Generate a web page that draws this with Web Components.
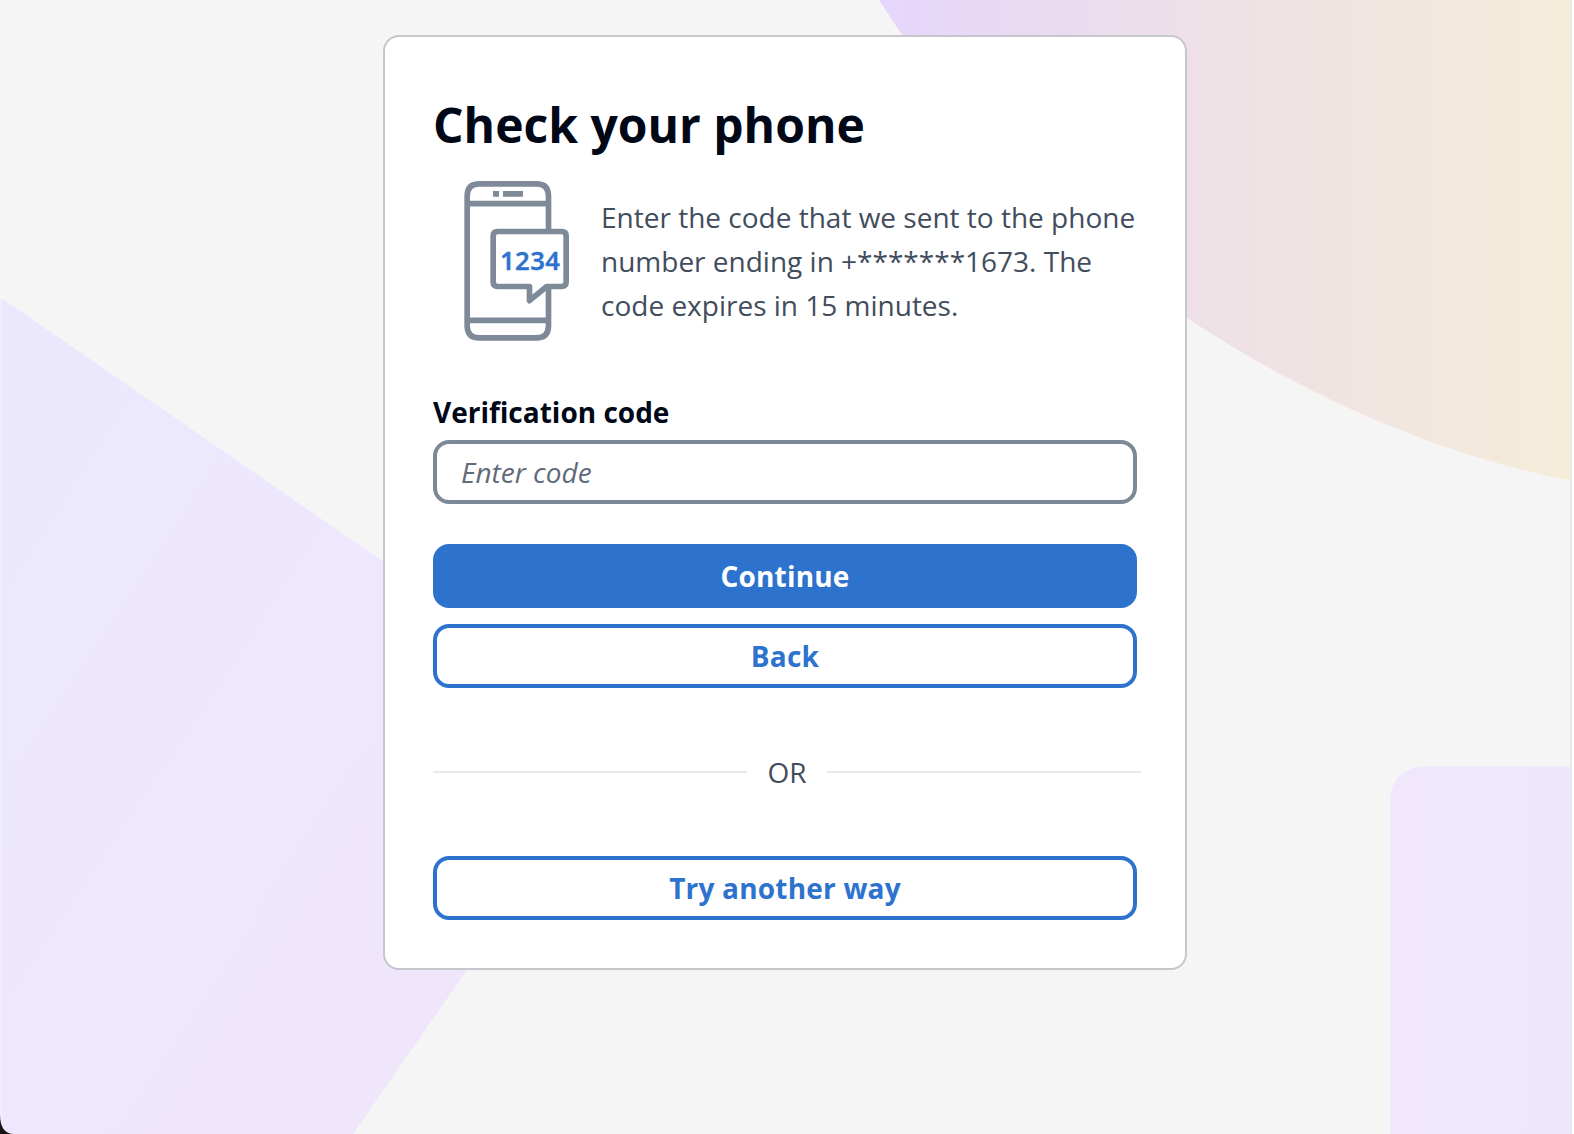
<!DOCTYPE html>
<html lang="en">
<head>
<meta charset="utf-8">
<title>Check your phone</title>
<style>
html, body {
  margin: 0;
  height: 100%;
}
body {
  overflow: hidden;
  font-family: "Open Sans", "Noto Sans", sans-serif;
  font-size: 28px;
  color: #424d5c;
}
</style>
</head>
<body>
<app-backdrop>
  <auth-card>
    <span slot="title">Check your phone</span>
    <phone-hint slot="hint">Enter the code that we sent to the phone number ending in +*******1673. The code expires in 15 minutes.</phone-hint>
    <code-field label="Verification code" placeholder="Enter code"></code-field>
    <action-button variant="primary">Continue</action-button>
    <action-button>Back</action-button>
    <or-divider>OR</or-divider>
    <action-button>Try another way</action-button>
  </auth-card>
</app-backdrop>

<script>
const define = (name, html, setup) => {
  const template = document.createElement("template");
  template.innerHTML = html;
  customElements.define(name, class extends HTMLElement {
    constructor() {
      super();
      this.attachShadow({ mode: "open" });
    }
    connectedCallback() {
      if (this.shadowRoot.firstChild) return;
      this.shadowRoot.appendChild(template.content.cloneNode(true));
      if (setup) setup(this);
    }
  });
};

// page background with the large coloured shapes
define("app-backdrop", `
<style>
:host {
  display: flex;
  justify-content: center;
  align-items: flex-start;
  box-sizing: border-box;
  width: 100%;
  height: 100vh;
  padding: 35px 4px 0 0;
  position: relative;
}
svg {
  position: absolute;
  inset: 0;
}
::slotted(*) {
  position: relative;
}
</style>
<svg width="1574" height="1134" viewBox="0 0 1574 1134">
  <defs>
    <linearGradient id="sun" gradientUnits="userSpaceOnUse" x1="880" y1="0" x2="1570" y2="0">
      <stop offset="0" stop-color="#e5d6fc"/>
      <stop offset=".45" stop-color="#ede0e7"/>
      <stop offset="1" stop-color="#f5ecd9"/>
    </linearGradient>
    <linearGradient id="tile" gradientUnits="userSpaceOnUse" x1="0" y1="500" x2="480" y2="820">
      <stop offset="0" stop-color="#ebe8fe"/>
      <stop offset="1" stop-color="#f0e6fc"/>
    </linearGradient>
    <linearGradient id="block">
      <stop offset="0" stop-color="#f0e7fc"/>
      <stop offset="1" stop-color="#ede6fe"/>
    </linearGradient>
  </defs>
  <rect width="1574" height="1134" fill="#f5f5f5"/>
  <path d="M879 0C958 124 1064 237 1187 318C1303 395 1434 453.500 1570 480.500V0Z" fill="url(#sun)"/>
  <path d="M0 297L631.500 733L353 1134H0Z" fill="url(#tile)"/>
  <path d="M0 290h2v844h-2z" fill="#fff" opacity=".25"/>
  <rect x="1390.500" y="766.500" width="240" height="420" rx="32" fill="url(#block)"/>
  <path d="M1570 0h2v1134h-2z" fill="#e8e8e8"/>
  <path d="M1572 0h2v1134h-2z" fill="#fff"/>
  <path d="M0 1114Q0 1134 14 1134H0Z" fill="#151515"/>
</svg>
<slot></slot>
`);

define("auth-card", `
<style>
:host {
  display: flex;
  flex-direction: column;
  box-sizing: border-box;
  width: 804px;
  height: 935px;
  padding: 48px;
  border: 2px solid #c6c6cd;
  border-radius: 16px;
  background: #fff;
}
h1 {
  margin: 7px 0 0;
  font-size: 48px;
  line-height: 66px;
  font-weight: 700;
  color: #000716;
}
</style>
<h1><slot name="title"></slot></h1>
<slot name="hint"></slot>
<slot></slot>
`);

define("phone-hint", `
<style>
:host {
  display: flex;
  align-items: center;
  height: 180px;
  margin-top: 12px;
  padding-left: 17px;
  gap: 21px;
}
svg {
  flex: none;
}
p {
  flex: 1;
  margin: 0;
  padding-top: 2px;
  line-height: 44px;
}
</style>
<svg width="130" height="180" viewBox="0 0 390 540" fill="none" stroke="#7f8a99" stroke-width="17" stroke-linejoin="round">
  <path d="M295.500 177V78Q295.500 41.500 259 41.500H88Q51.500 41.500 51.500 78V467Q51.500 503.500 88 503.500H259Q295.500 503.500 295.500 467V350"/>
  <path d="M52 101H295M52 451H295"/>
  <path d="M129 71.500h18M159 71.500h60"/>
  <path d="M143 184.500H335Q348.500 184.500 348.500 198V336Q348.500 349.500 335 349.500H290L238.500 392V349.500H143Q129.500 349.500 129.500 336V198Q129.500 184.500 143 184.500Z"/>
  <text x="240" y="301" text-anchor="middle" font-family="Noto Sans, sans-serif" font-size="77" font-weight="600" textLength="180" fill="#2d73cd" stroke="#2d73cd" stroke-width="1">1234</text>
</svg>
<p><slot></slot></p>
`);

define("code-field", `
<style>
:host {
  display: block;
  margin-top: 40px;
}
label {
  display: block;
  font-weight: 700;
  line-height: 44px;
  color: #000716;
}
input {
  display: block;
  box-sizing: border-box;
  width: 100%;
  height: 64px;
  margin-top: 6px;
  padding: 0 24px;
  border: 4px solid #7d8998;
  border-radius: 16px;
  font: inherit;
  background: #fff;
}
input::placeholder {
  color: #5f6b7a;
  font-style: italic;
  opacity: 1;
}
</style>
<label for="code"></label>
<input id="code" type="text">
`, (el) => {
  el.shadowRoot.querySelector("label").textContent = el.getAttribute("label");
  el.shadowRoot.querySelector("input").placeholder = el.getAttribute("placeholder");
});

define("action-button", `
<style>
:host {
  display: block;
  margin-top: 16px;
}
:host([variant="primary"]) {
  margin-top: 40px;
}
button {
  display: block;
  box-sizing: border-box;
  width: 100%;
  height: 64px;
  padding: 0;
  border: 4px solid #2d73cd;
  border-radius: 16px;
  background: #fff;
  color: #2d73cd;
  font: inherit;
  font-weight: 700;
  letter-spacing: .2px;
  cursor: pointer;
}
:host([variant="primary"]) button {
  background: #2d73cd;
  color: #fff;
}
</style>
<button><slot></slot></button>
`);

define("or-divider", `
<style>
:host {
  display: flex;
  align-items: center;
  width: 708px;
  height: 44px;
  margin: 62px 0 46px;
}
:host::before,
:host::after {
  content: "";
  flex: 1;
  height: 2px;
  background: #e9e9ed;
}
span {
  width: 80px;
  text-align: center;
}
</style>
<span><slot></slot></span>
`);
</script>
</body>
</html>
